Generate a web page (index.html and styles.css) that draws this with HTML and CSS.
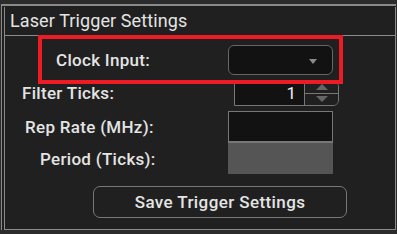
FILE: index.html
```html
<!DOCTYPE html>
<html lang="en">
<head>
<meta charset="UTF-8">
<meta name="viewport" content="width=device-width, initial-scale=1.0">
<title>Laser Trigger Settings</title>
<link rel="stylesheet" href="styles.css">
</head>
<body>
<div class="frame">
  <div class="group">
    <div class="group-title">Laser Trigger Settings</div>

    <div class="row row-clock">
      <span class="label label-clock">Clock Input:</span>
      <div class="dropdown"><span class="arrow"></span></div>
    </div>

    <div class="row row-ticks">
      <span class="label label-ticks">Filter Ticks:</span>
      <div class="spinner">
        <div class="spin-value">1</div>
        <div class="spin-buttons">
          <div class="spin-btn"><span class="tri-up"></span></div>
          <div class="spin-btn"><span class="tri-down"></span></div>
        </div>
      </div>
    </div>

    <div class="row row-rate">
      <span class="label label-rate">Rep Rate (MHz):</span>
      <div class="field"></div>
    </div>

    <div class="row row-period">
      <span class="label label-period">Period (Ticks):</span>
      <div class="field field-disabled"></div>
    </div>

    <div class="actions">
      <div class="save-btn">Save Trigger Settings</div>
    </div>

    <div class="highlight"></div>
  </div>
</div>
</body>
</html>
```

FILE: styles.css
```css
body {
  margin: 0;
  padding: 4px 1px 0 1px;
  background-color: #2c2c2c;
  font-family: Roboto, "Liberation Sans", sans-serif;
  color: #e4e4e4;
  height: 230px;
  overflow: hidden;
}

.frame {
  border-top: 2px solid #8a8a8a;
  border-left: 1px solid #8a8a8a;
  background-color: #202020;
  padding-left: 2px;
  height: 224px;
}

.group {
  position: relative;
  margin-top: 1px;
  border-left: 1px solid #8a8a8a;
  border-right: 1px solid #8a8a8a;
  border-bottom: 1px solid #8a8a8a;
  height: 223px;
  box-sizing: border-box;
  width: 392px;
}

.group-title {
  height: 28px;
  line-height: 28px;
  padding-left: 5px;
  font-size: 18px;
  letter-spacing: 0.1px;
  border-bottom: 1px solid #8a8a8a;
}

.row {
  display: flex;
  align-items: center;
}

.label {
  font-size: 17px;
  font-weight: 500;
  letter-spacing: 0.3px;
}

.row-clock {
  height: 40px;
  margin-top: 4px;
}

.row-ticks {
  height: 26px;
}

.row-rate {
  height: 32px;
  margin-top: 5px;
}

.row-period {
  height: 31px;
}

.label-clock { padding-left: 51px; }
.label-ticks { padding-left: 17px; }
.label-rate { padding-left: 20px; }
.label-period { padding-left: 35px; }

.dropdown {
  position: relative;
  margin-left: auto;
  margin-right: 62px;
  width: 105px;
  height: 30px;
  box-sizing: border-box;
  background-color: #121212;
  border: 1px solid #666;
  border-radius: 6px;
}

.arrow {
  position: absolute;
  right: 15px;
  top: 13px;
  border-left: 4px solid transparent;
  border-right: 4px solid transparent;
  border-top: 5px solid #8a8a8a;
}

.spinner {
  display: flex;
  margin-left: auto;
  margin-right: 56px;
  width: 105px;
  height: 25px;
  box-sizing: border-box;
  border: 1px solid #777;
  border-radius: 0 6px 6px 0;
  background-color: #121212;
}

.spin-value {
  flex: 1;
  text-align: right;
  padding-right: 8px;
  font-size: 17px;
  line-height: 23px;
  color: #f0f0f0;
}

.spin-buttons {
  width: 33px;
  border-left: 1px solid #777;
  display: flex;
  flex-direction: column;
  background-color: #202020;
  border-radius: 0 5px 5px 0;
}

.spin-btn {
  flex: 1;
  display: flex;
  align-items: center;
  justify-content: center;
}

.spin-btn + .spin-btn {
  border-top: 1px solid #777;
}

.tri-up {
  border-left: 6px solid transparent;
  border-right: 6px solid transparent;
  border-bottom: 6px solid #666;
}

.tri-down {
  border-left: 6px solid transparent;
  border-right: 6px solid transparent;
  border-top: 6px solid #666;
}

.field {
  margin-left: auto;
  margin-right: 62px;
  width: 105px;
  height: 32px;
  box-sizing: border-box;
  background-color: #121212;
  border: 1px solid #777;
  border-bottom-width: 2px;
}

.field-disabled {
  height: 31px;
  background-color: #555;
  border: none;
}

.actions {
  padding-left: 88px;
  margin-top: 12px;
}

.save-btn {
  width: 254px;
  height: 32px;
  box-sizing: border-box;
  border: 1px solid #777;
  border-radius: 7px;
  text-align: center;
  line-height: 30px;
  font-size: 17px;
  font-weight: 500;
  letter-spacing: 0.4px;
}

.highlight {
  position: absolute;
  left: 33px;
  top: 28px;
  width: 305px;
  height: 49px;
  box-sizing: border-box;
  border: 4px solid #ed1c24;
}
```
